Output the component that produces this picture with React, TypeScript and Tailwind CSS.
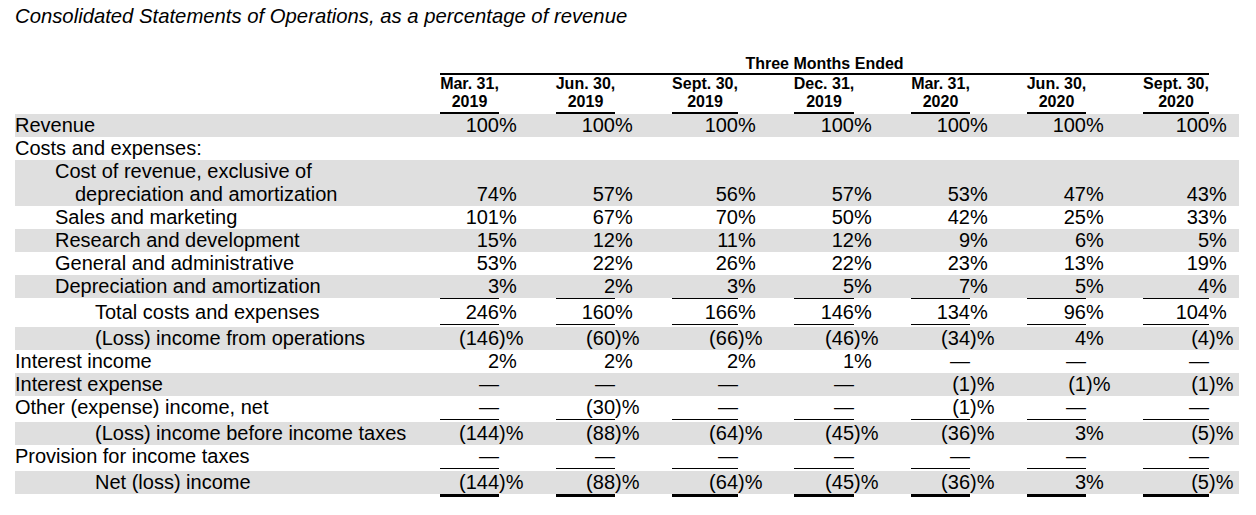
import React from "react";

// Columns: label | (number, suffix) x 7
const GRID =
  "grid grid-cols-[425px_59px_57px_59px_57px_66px_56px_60px_57px_59px_57px_59px_57px_66px_30px]";

type Line = "none" | "single" | "thick";

interface RowData {
  label: string;
  label2?: string;
  indent?: number;
  values?: string[];
  line?: Line;
}

const periods = [
  ["Mar. 31,", "2019"],
  ["Jun. 30,", "2019"],
  ["Sept. 30,", "2019"],
  ["Dec. 31,", "2019"],
  ["Mar. 31,", "2020"],
  ["Jun. 30,", "2020"],
  ["Sept. 30,", "2020"],
];

const D = "—";

const rows: RowData[] = [
  { label: "Revenue", values: ["100", "100", "100", "100", "100", "100", "100"] },
  { label: "Costs and expenses:" },
  {
    label: "Cost of revenue, exclusive of",
    label2: "depreciation and amortization",
    indent: 1,
    values: ["74", "57", "56", "57", "53", "47", "43"],
  },
  { label: "Sales and marketing", indent: 1, values: ["101", "67", "70", "50", "42", "25", "33"] },
  { label: "Research and development", indent: 1, values: ["15", "12", "11", "12", "9", "6", "5"] },
  { label: "General and administrative", indent: 1, values: ["53", "22", "26", "22", "23", "13", "19"] },
  { label: "Depreciation and amortization", indent: 1, values: ["3", "2", "3", "5", "7", "5", "4"], line: "single" },
  { label: "Total costs and expenses", indent: 2, values: ["246", "160", "166", "146", "134", "96", "104"], line: "single" },
  { label: "(Loss) income from operations", indent: 2, values: ["(146)", "(60)", "(66)", "(46)", "(34)", "4", "(4)"] },
  { label: "Interest income", values: ["2", "2", "2", "1", D, D, D] },
  { label: "Interest expense", values: [D, D, D, D, "(1)", "(1)", "(1)"] },
  { label: "Other (expense) income, net", values: [D, "(30)", D, D, "(1)", D, D], line: "single" },
  { label: "(Loss) income before income taxes", indent: 2, values: ["(144)", "(88)", "(64)", "(45)", "(36)", "3", "(5)"] },
  { label: "Provision for income taxes", values: [D, D, D, D, D, D, D], line: "single" },
  { label: "Net (loss) income", indent: 2, values: ["(144)", "(88)", "(64)", "(45)", "(36)", "3", "(5)"], line: "thick" },
];

function split(v: string): [string, string] {
  if (v === D) return [D, ""];
  if (v.endsWith(")")) return [v.slice(0, -1), ")%"];
  return [v, "%"];
}

function indentClass(indent?: number) {
  if (indent === 1) return "pl-[40px]";
  if (indent === 2) return "pl-[80px]";
  return "";
}

function Row({ row, shaded }: { row: RowData; shaded: boolean }) {
  const tall = !!row.label2;
  return (
    <div>
      <div className={`${GRID} ${tall ? "h-[46px]" : "h-[23px]"} ${shaded ? "bg-[#dfdfdf]" : ""}`}>
        <div className={`whitespace-nowrap ${indentClass(row.indent)}`}>
          <div>{row.label}</div>
          {row.label2 && <div className="pl-[20px]">{row.label2}</div>}
        </div>
        {Array.from({ length: 7 }).map((_, i) => {
          const [num, suf] = row.values ? split(row.values[i]) : ["", ""];
          return (
            <React.Fragment key={i}>
              <div className="flex items-end justify-end whitespace-nowrap">{num}</div>
              <div className="flex items-end whitespace-nowrap">{suf}</div>
            </React.Fragment>
          );
        })}
      </div>
      {row.line && row.line !== "none" && (
        <div className={`${GRID} ${row.line === "thick" ? "h-[3px]" : "h-[1px] mb-[2px]"}`}>
          <div />
          {Array.from({ length: 7 }).map((_, i) => (
            <React.Fragment key={i}>
              <div className="bg-black" />
              <div />
            </React.Fragment>
          ))}
        </div>
      )}
    </div>
  );
}

export default function App() {
  return (
    <div className="min-h-screen bg-white text-black font-['Liberation_Sans',Arial,sans-serif]">
      <div className="w-[1224px] ml-[15px] pt-[4px]">
        <h1 className="italic text-[20.3px] leading-[24px]">
          Consolidated Statements of Operations, as a percentage of revenue
        </h1>

        {/* Column headings */}
        <div className={`${GRID} mt-[27px] text-[16px] leading-[18px] font-bold`}>
          <div className="col-start-2 col-end-15 border-b-2 border-black text-center">
            Three Months Ended
          </div>
          <div className="col-start-1" />
          {periods.map(([a, b], i) => (
            <React.Fragment key={i}>
              <div className="flex flex-col items-center whitespace-nowrap border-b-2 border-black pb-[1px]">
                <span>{a}</span>
                <span>{b}</span>
              </div>
              <div />
            </React.Fragment>
          ))}
        </div>

        {/* Body */}
        <div className="text-[20px] leading-[23px]">
          {rows.map((row, i) => (
            <Row key={i} row={row} shaded={i % 2 === 0} />
          ))}
        </div>
      </div>
    </div>
  );
}
